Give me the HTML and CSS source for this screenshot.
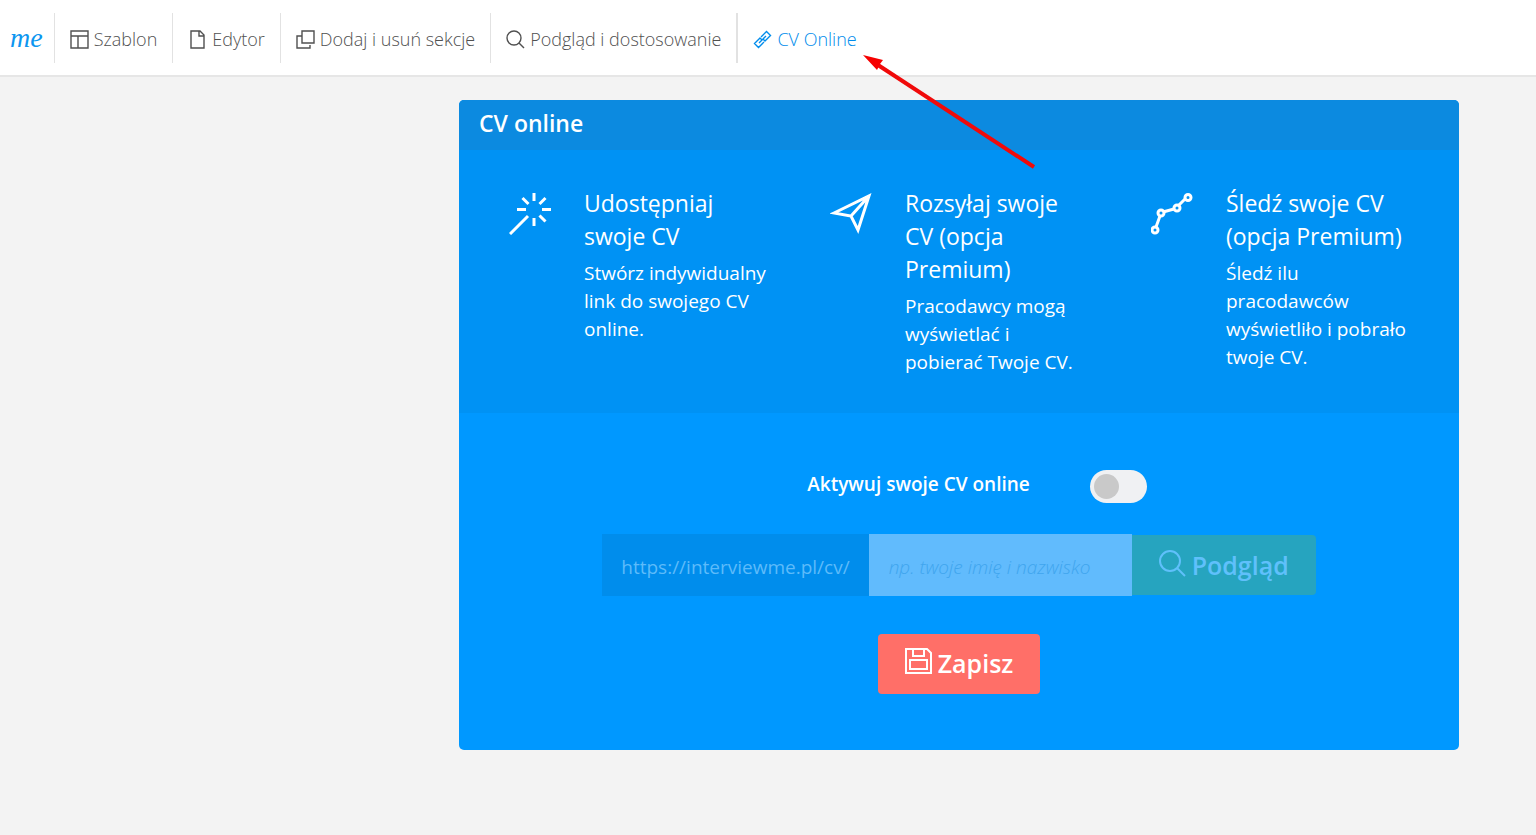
FILE: index.html
```html
<!DOCTYPE html>
<html lang="pl">
<head>
    <meta charset="UTF-8">
    <meta name="viewport" content="width=device-width, initial-scale=1.0">
    <title>CV online</title>
    <link rel="stylesheet" href="styles.css">
</head>
<body>
    <header class="topbar">
        <a href="#" class="logo">me</a>
        <nav class="menu">
            <a href="#" class="menu-item">
                <svg class="menu-icon" viewBox="0 0 19 19"><path d="M1 1h17v17H1zM1 6h17M8 6v12"/></svg>
                Szablon
            </a>
            <a href="#" class="menu-item">
                <svg class="menu-icon" viewBox="0 0 19 19"><path d="M3 1h9l4 4v13H3zM11 1v5h5"/></svg>
                Edytor
            </a>
            <a href="#" class="menu-item">
                <svg class="menu-icon" viewBox="0 0 19 19"><path d="M6 1h12v12H6zM6 6H1v12h13v-3"/></svg>
                Dodaj i usuń sekcje
            </a>
            <a href="#" class="menu-item">
                <svg class="menu-icon" viewBox="0 0 19 19"><circle cx="8" cy="8" r="7"/><path d="M13 13l5 5"/></svg>
                Podgląd i dostosowanie
            </a>
            <a href="#" class="menu-item active">
                <svg class="menu-icon" viewBox="0 0 19 19">
                    <path d="M8 7l5.500-5.500L17.500 5.500 12 11l-2-2M11 12l-5.500 5.500L1.500 13.500 7 8l2 2M6 13l7-7"/>
                </svg>
                CV Online
            </a>
        </nav>
    </header>

    <main class="content">
        <section class="panel">
            <h1 class="panel-title">CV online</h1>

            <div class="features">
                <div class="feature">
                    <svg class="feature-icon" viewBox="0 0 42 42">
                        <path d="M1 41l18-18M25 0v8M25 25v8M8 16.500h9M33 16.500h9M13.500 5l6 6M36.500 5l-6 6M30.500 22.500l6 6"/>
                    </svg>
                    <div>
                        <h2>Udostępniaj swoje CV</h2>
                        <p>Stwórz indywidualny link do swojego CV online.</p>
                    </div>
                </div>
                <div class="feature">
                    <svg class="feature-icon thin" viewBox="0 0 42 42">
                        <path d="M4 20L39 3 28 37 21 23zM21 23L39 3"/>
                    </svg>
                    <div>
                        <h2>Rozsyłaj swoje CV (opcja Premium)</h2>
                        <p>Pracodawcy mogą wyświetlać i pobierać Twoje CV.</p>
                    </div>
                </div>
                <div class="feature">
                    <svg class="feature-icon" viewBox="0 0 42 42">
                        <path d="M5 34l4-11M12 19l11-3M28 12l6-6"/>
                        <circle cx="4" cy="37" r="3"/>
                        <circle cx="10" cy="20" r="3"/>
                        <circle cx="26" cy="15" r="3"/>
                        <circle cx="37" cy="4.500" r="3"/>
                    </svg>
                    <div>
                        <h2>Śledź swoje CV (opcja Premium)</h2>
                        <p>Śledź ilu pracodawców wyświetliło i pobrało twoje CV.</p>
                    </div>
                </div>
            </div>

            <form class="settings">
                <div class="activate">
                    <label for="activate-cv">Aktywuj swoje CV online</label>
                    <input type="checkbox" id="activate-cv" class="toggle">
                </div>
                <div class="link-row">
                    <label for="cv-name" class="link-prefix">https://interviewme.pl/cv/</label>
                    <input type="text" id="cv-name" class="link-input" placeholder="np. twoje imię i nazwisko" disabled>
                    <button type="button" class="btn btn-preview" disabled>
                        <svg class="btn-icon" viewBox="0 0 27 27"><circle cx="11" cy="11" r="10"/><path d="M18 18l8 8"/></svg>
                        Podgląd
                    </button>
                </div>
                <button type="submit" class="btn btn-save">
                    <svg class="btn-icon" viewBox="0 0 27 27"><path d="M1 1h21l4 4v20H1zM8 1v7h11V1M5 12h17v9H5z"/></svg>
                    Zapisz
                </button>
            </form>
        </section>
    </main>

    <!-- pointer to the CV Online tab -->
    <svg class="arrow" viewBox="0 0 174 116">
        <path class="arrow-line" d="M15 11L171 113"/>
        <path class="arrow-head" d="M0 1l20 5-3 4-3 6z"/>
    </svg>
</body>
</html>
```
FILE: styles.css
```css
* {
    box-sizing: border-box;
}

body {
    margin: 0;
    background-color: #f3f3f3;
    font-family: "Open Sans", "Noto Sans", sans-serif;
}

h1, h2, p {
    margin: 0;
}

svg {
    fill: none;
    stroke: currentColor;
    flex-shrink: 0;
}

/* top bar */
.topbar {
    display: flex;
    align-items: center;
    padding: 13px 0 12px;
    background-color: white;
    border-bottom: 2px solid #e6e6e6;
}

.logo {
    padding: 0 11px 0 10px;
    color: #0c96f0;
    font-family: "Liberation Serif", serif;
    font-style: italic;
    font-size: 28px;
    line-height: 40px;
    text-decoration: none;
}

.menu {
    display: flex;
}

.menu-item {
    display: flex;
    align-items: center;
    gap: 5px;
    height: 50px;
    padding: 2px 15px 0;
    border-left: 1px solid #e2e2e2;
    color: #505050;
    font-size: 18px;
    font-weight: 300;
    text-decoration: none;
}

.menu-item.active {
    border-left-width: 2px;
    color: #008cec;
}

.menu-icon {
    width: 19px;
    height: 19px;
    stroke-width: 1.4;
}

/* panel */
.content {
    display: flex;
    justify-content: flex-end;
    padding: 23px 77px 40px 20px;
}

.panel {
    width: 100%;
    max-width: 1000px;
    background-color: #0098ff;
    border-radius: 5px;
    color: white;
    overflow: hidden;
}

.panel-title {
    padding: 0 20px 4px;
    background-color: #0c8ae0;
    font-size: 23px;
    font-weight: 600;
    line-height: 46px;
}

.features {
    display: grid;
    grid-template-columns: repeat(3, 1fr);
    padding: 37px 17px 37px 20px;
    background-color: #0092f4;
}

.feature {
    display: flex;
    gap: 33px;
    padding: 0 32px 0 30px;
}

.feature-icon {
    width: 42px;
    height: 42px;
    margin-top: 6px;
    stroke-width: 3;
}

.feature h2 {
    margin-bottom: 6px;
    font-size: 23px;
    font-weight: 400;
    line-height: 33px;
}

.feature p {
    font-size: 19px;
    line-height: 28px;
}

/* form */
.settings {
    display: flex;
    flex-direction: column;
    align-items: center;
    padding: 57px 20px 56px;
}

.activate {
    display: flex;
    align-items: flex-start;
    gap: 60px;
    margin-bottom: 31px;
    padding-left: 36px;
    font-size: 19px;
    font-weight: 600;
    line-height: 28px;
}

.toggle {
    appearance: none;
    width: 57px;
    height: 33px;
    margin: 0;
    padding: 4px;
    background-color: #f0f1f3;
    border-radius: 17px;
    cursor: pointer;
}

.toggle::before {
    content: "";
    display: block;
    width: 25px;
    height: 25px;
    background-color: #c9c9c9;
    border-radius: 50%;
}

.toggle:checked::before {
    margin-left: auto;
    background-color: #26a4bf;
}

.link-row {
    display: flex;
    align-items: center;
    margin-bottom: 38px;
}

.link-prefix {
    padding: 4px 19px 0;
    background-color: #008dec;
    color: #5dbbfa;
    font-size: 19px;
    line-height: 58px;
}

.link-input {
    width: 263px;
    height: 62px;
    padding: 4px 20px 0;
    border: none;
    background-color: #61bbfd;
    font-family: inherit;
    font-size: 19px;
}

.link-input::placeholder {
    color: #3fa5ee;
    font-style: italic;
    font-weight: 300;
}

.btn {
    display: flex;
    align-items: center;
    gap: 6px;
    height: 60px;
    padding: 0 27px 2px;
    border: none;
    border-radius: 4px;
    color: white;
    font-family: inherit;
    font-size: 25px;
    font-weight: 600;
}

.btn-icon {
    width: 27px;
    height: 27px;
    margin-bottom: 4px;
    stroke-width: 2;
}

.btn-preview {
    padding-bottom: 0;
    border-radius: 0 4px 4px 0;
    background-color: #26a4bf;
    color: #5fc0fb;
}

.btn-save {
    background-color: #ff6f68;
}

/* arrow */
.arrow {
    position: absolute;
    top: 54px;
    left: 863px;
    width: 174px;
    height: 116px;
    pointer-events: none;
}

.arrow-line {
    stroke: #f00a0a;
    stroke-width: 4;
}

.arrow-head {
    fill: #f60000;
    stroke: none;
}
```
